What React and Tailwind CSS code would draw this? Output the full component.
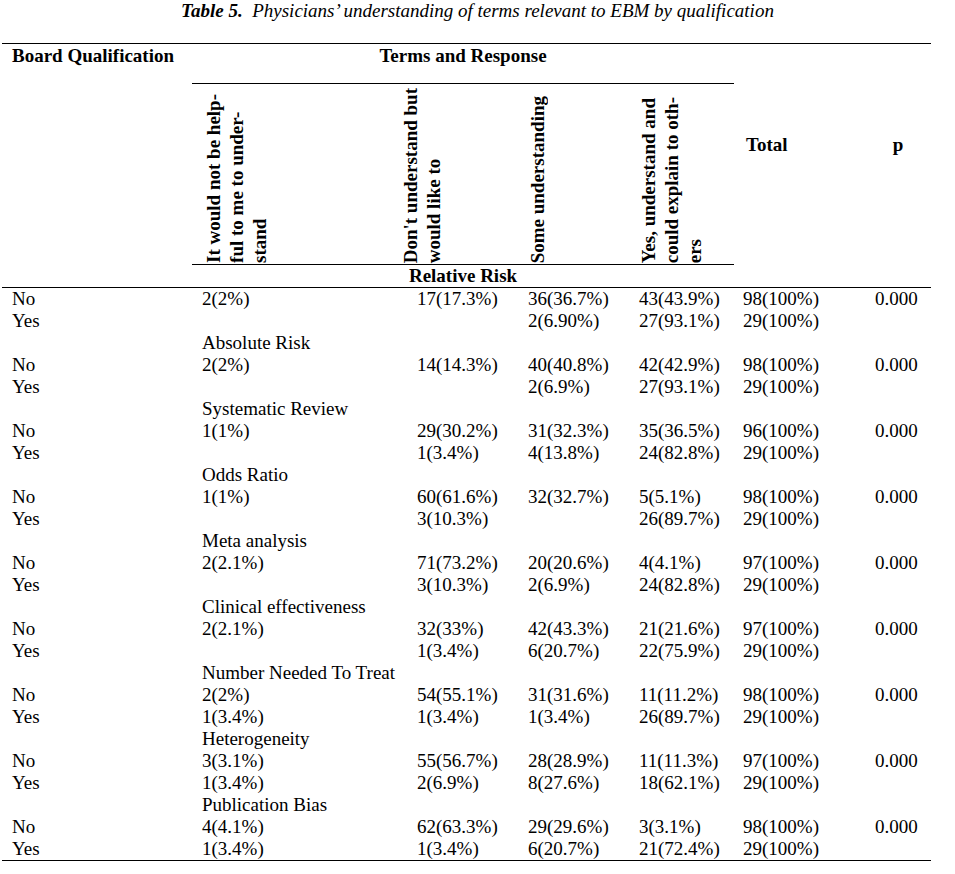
const terms = [
  {
    term: "Absolute Risk",
    no: ["2(2%)", "14(14.3%)", "40(40.8%)", "42(42.9%)", "98(100%)", "0.000"],
    yes: ["", "", "2(6.9%)", "27(93.1%)", "29(100%)", ""],
  },
  {
    term: "Systematic Review",
    no: ["1(1%)", "29(30.2%)", "31(32.3%)", "35(36.5%)", "96(100%)", "0.000"],
    yes: ["", "1(3.4%)", "4(13.8%)", "24(82.8%)", "29(100%)", ""],
  },
  {
    term: "Odds Ratio",
    no: ["1(1%)", "60(61.6%)", "32(32.7%)", "5(5.1%)", "98(100%)", "0.000"],
    yes: ["", "3(10.3%)", "", "26(89.7%)", "29(100%)", ""],
  },
  {
    term: "Meta analysis",
    no: ["2(2.1%)", "71(73.2%)", "20(20.6%)", "4(4.1%)", "97(100%)", "0.000"],
    yes: ["", "3(10.3%)", "2(6.9%)", "24(82.8%)", "29(100%)", ""],
  },
  {
    term: "Clinical effectiveness",
    no: ["2(2.1%)", "32(33%)", "42(43.3%)", "21(21.6%)", "97(100%)", "0.000"],
    yes: ["", "1(3.4%)", "6(20.7%)", "22(75.9%)", "29(100%)", ""],
  },
  {
    term: "Number Needed To Treat",
    no: ["2(2%)", "54(55.1%)", "31(31.6%)", "11(11.2%)", "98(100%)", "0.000"],
    yes: ["1(3.4%)", "1(3.4%)", "1(3.4%)", "26(89.7%)", "29(100%)", ""],
  },
  {
    term: "Heterogeneity",
    no: ["3(3.1%)", "55(56.7%)", "28(28.9%)", "11(11.3%)", "97(100%)", "0.000"],
    yes: ["1(3.4%)", "2(6.9%)", "8(27.6%)", "18(62.1%)", "29(100%)", ""],
  },
  {
    term: "Publication Bias",
    no: ["4(4.1%)", "62(63.3%)", "29(29.6%)", "3(3.1%)", "98(100%)", "0.000"],
    yes: ["1(3.4%)", "1(3.4%)", "6(20.7%)", "21(72.4%)", "29(100%)", ""],
  },
];

const firstTerm = {
  no: ["2(2%)", "17(17.3%)", "36(36.7%)", "43(43.9%)", "98(100%)", "0.000"],
  yes: ["", "", "2(6.90%)", "27(93.1%)", "29(100%)", ""],
};

const responses = [
  { width: "w-[197px]", lines: ["It would not be help-", "ful to me to under-", "stand"] },
  { width: "w-[127px]", lines: ["Don't understand but", "would like to"] },
  { width: "w-[111px]", lines: ["Some understanding"] },
  { width: "w-[107px]", lines: ["Yes, understand and", "could explain to oth-", "ers"] },
];

function Row({ label, cells }) {
  return (
    <>
      <div className="pl-[10px] h-[22px]">{label}</div>
      {cells.map((c, i) => (
        <div key={i} className="pl-[10px] h-[22px] whitespace-nowrap">
          {c}
        </div>
      ))}
    </>
  );
}

export default function App() {
  return (
    <div
      className="w-[955px] bg-white text-black text-[19px] leading-[22px]"
      style={{ fontFamily: '"Liberation Serif", "Times New Roman", serif' }}>
      <div className="h-[22px] text-center italic">
        <span className="font-bold">Table 5.</span>&nbsp; Physicians’ understanding of terms relevant to EBM by qualification
      </div>

      {/* header */}
      <div className="mt-[21px] ml-[2px] w-[929px] border-t border-black flex font-bold">
        <div className="w-[190px] pl-[10px] pt-[1px]">Board Qualification</div>
        <div className="w-[542px] flex flex-col">
          <div className="h-[40px] pt-[1px] text-center border-b border-black">Terms and Response</div>
          <div className="h-[181px] flex border-b border-black">
            {responses.map((r, i) => (
              <div key={i} className={`${r.width} pl-[10px] pb-[1px] flex items-end`}>
                <div className="[writing-mode:vertical-rl] rotate-180 whitespace-nowrap leading-[23px]">
                  {r.lines.map((l, j) => (
                    <div key={j}>{l}</div>
                  ))}
                </div>
              </div>
            ))}
          </div>
          <div className="h-[22px] text-center">Relative Risk</div>
        </div>
        <div className="w-[131px] pl-[12px] pt-[90px]">Total</div>
        <div className="w-[66px] pt-[90px] text-center">p</div>
      </div>

      {/* body */}
      <div className="ml-[2px] w-[929px] border-t border-b border-black grid grid-cols-[190px_215px_111px_111px_104px_132px_66px]">
        <Row label="No" cells={firstTerm.no} />
        <Row label="Yes" cells={firstTerm.yes} />
        {terms.map((t) => (
          <>
            <div className="h-[22px]"></div>
            <div className="col-span-6 pl-[10px] h-[22px]">{t.term}</div>
            <Row label="No" cells={t.no} />
            <Row label="Yes" cells={t.yes} />
          </>
        ))}
      </div>
    </div>
  );
}
